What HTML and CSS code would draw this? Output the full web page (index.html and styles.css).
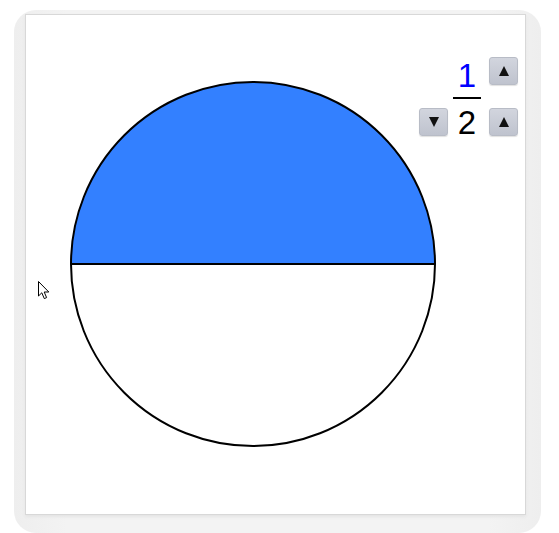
FILE: index.html
```html
<!DOCTYPE html>
<html>
<head>
<meta charset="utf-8">
<link rel="stylesheet" href="styles.css">
</head>
<body>
<div class="frame">
  <div class="panel">
    <svg class="canvas" width="499" height="499" viewBox="0 0 499 499">
      <path d="M45 249 A182 182 0 0 1 409 249 Z" fill="#3380ff"/>
      <circle cx="227" cy="249" r="182" fill="none" stroke="#000" stroke-width="2"/>
      <line x1="45" y1="249" x2="409" y2="249" stroke="#000" stroke-width="2"/>
    </svg>
    <div class="controls">
      <div class="cell"></div>
      <div class="num">1</div>
      <button class="btn"><span class="tri up"></span></button>
      <button class="btn"><span class="tri down"></span></button>
      <div class="den">2</div>
      <button class="btn"><span class="tri up"></span></button>
    </div>
    <svg class="cursor" width="14" height="22" viewBox="0 0 14 22">
      <path d="M1.5 1.5 L1.5 16 L4.8 12.8 L7.3 18.6 L9.6 17.6 L7.2 12 L11.8 12 Z" fill="#fff" stroke="#000" stroke-width="1" stroke-linejoin="miter"/>
    </svg>
  </div>
</div>
</body>
</html>
```
FILE: styles.css
```css
html, body {
  margin: 0;
  padding: 0;
  background: #fff;
}
body {
  padding: 10px 0 0 14px;
  font-family: "Liberation Sans", Arial, sans-serif;
}
.frame {
  width: 527px;
  height: 523px;
  box-sizing: border-box;
  padding: 4px 15px 18px 11px;
  background: linear-gradient(90deg, #eeeeee, #f3f3f3 10%, #f3f3f3 90%, #eeeeee);
  border-radius: 22px;
}
.panel {
  position: relative;
  width: 501px;
  height: 501px;
  box-sizing: border-box;
  border: 1px solid #d8d8d8;
  background: #fff;
  box-shadow: 0 2px 3px #e4e4e4;
}
.canvas {
  display: block;
}
.controls {
  position: absolute;
  top: 42px;
  left: 393px;
  display: grid;
  grid-template-columns: 28px 42px 29px;
  grid-template-rows: 51px 30px;
}
.num, .den {
  font-size: 33px;
  line-height: 34px;
  text-align: center;
}
.num {
  color: #0000ff;
  height: 42px;
  box-sizing: border-box;
  padding-top: 2px;
  margin: 0 8px 0 6px;
  border-bottom: 2px solid #000;
}
.den {
  color: #000;
  margin: -2px 2px 0 0;
}
.btn {
  width: 29px;
  height: 28px;
  padding: 0;
  margin: 0;
  border: 1px solid #b8bcc6;
  border-radius: 3px;
  background: linear-gradient(#d2d5de, #bfc3ce);
  display: flex;
  align-items: center;
  justify-content: center;
  box-shadow: 0 1px 1px #e0e0e0;
}
.tri {
  width: 0;
  height: 0;
  border-left: 5px solid transparent;
  border-right: 5px solid transparent;
}
.tri.up {
  border-bottom: 10px solid #111;
}
.tri.down {
  border-top: 10px solid #111;
}
.cursor {
  position: absolute;
  left: 11px;
  top: 265px;
}
```
